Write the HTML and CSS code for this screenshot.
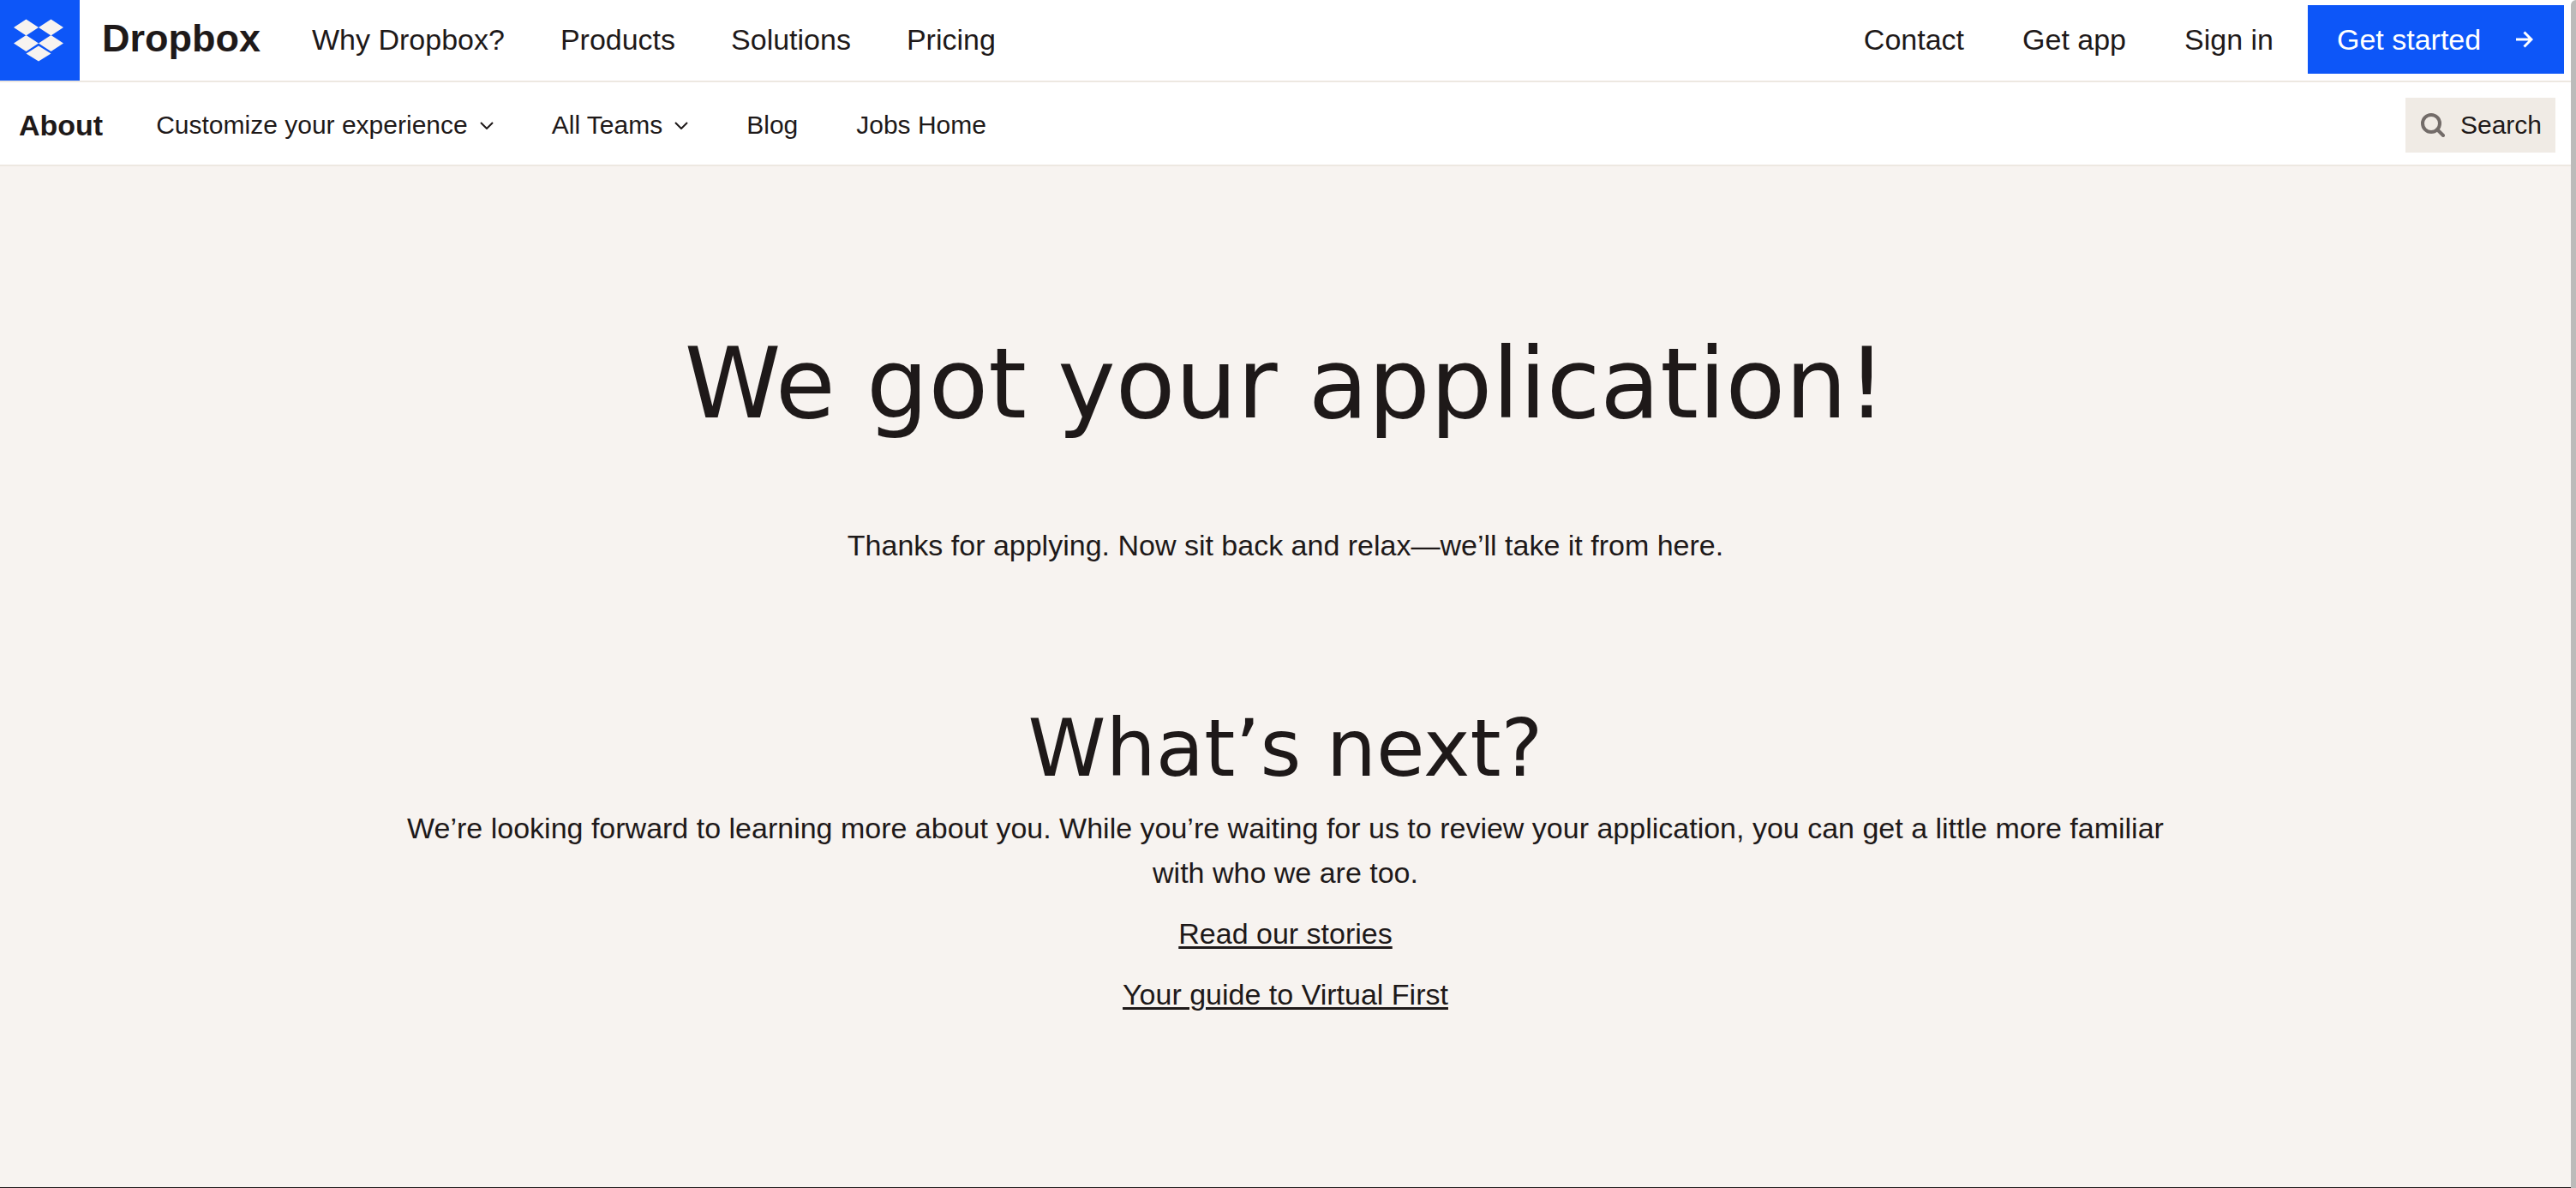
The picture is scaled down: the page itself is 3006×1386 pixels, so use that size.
FILE: index.html
```html
<!DOCTYPE html>
<html lang="en">
<head>
<meta charset="utf-8">
<title>Application received - Dropbox Jobs</title>
<link rel="stylesheet" href="styles.css">
</head>
<body>
<div class="page">
  <header class="topbar">
    <a class="logo" href="#" aria-label="Dropbox home">
      <svg viewBox="0 0 60 50" width="60" height="50" fill="currentColor" aria-hidden="true">
        <path d="M15.500.5 30 10 15.500 19.500 1 10zM44.500.5 59 10 44.500 19.500 30 10zM15.500 19 30 28.500 15.500 38 1 28.500zM44.500 19 59 28.500 44.500 38 30 28.500zM30 31.500 44.500 40.500 30 49.500 15.500 40.500z"/>
      </svg>
    </a>
    <a class="wordmark" href="#">Dropbox</a>
    <nav class="links" aria-label="Main">
      <a href="#">Why Dropbox?</a>
      <a href="#">Products</a>
      <a href="#">Solutions</a>
      <a href="#">Pricing</a>
    </nav>
    <nav class="links links-end" aria-label="Account">
      <a href="#">Contact</a>
      <a href="#">Get app</a>
      <a href="#">Sign in</a>
    </nav>
    <button class="cta" type="button">Get started
      <svg viewBox="0 0 20 20" width="20" height="20" fill="none" stroke="currentColor" stroke-width="3" aria-hidden="true"><path d="M0 10h18M9.500 1.500 18 10l-8.500 8.500"/></svg>
    </button>
  </header>

  <div class="subbar">
    <a class="section" href="#">About</a>
    <nav class="sublinks" aria-label="Jobs">
      <button class="menu" type="button">Customize your experience
        <svg viewBox="0 0 16 9" width="16" height="9" fill="none" stroke="currentColor" stroke-width="2" aria-hidden="true"><path d="M1 1l7 7 7-7"/></svg>
      </button>
      <button class="menu" type="button">All Teams
        <svg viewBox="0 0 16 9" width="16" height="9" fill="none" stroke="currentColor" stroke-width="2" aria-hidden="true"><path d="M1 1l7 7 7-7"/></svg>
      </button>
      <a href="#">Blog</a>
      <a href="#">Jobs Home</a>
    </nav>
    <button class="search" type="button">
      <svg viewBox="0 0 28 28" width="28" height="28" fill="none" stroke="currentColor" stroke-width="4" aria-hidden="true"><circle cx="12" cy="12" r="10"/><path d="M19 19l7 7" stroke-linecap="round"/></svg>
      <span>Search</span>
    </button>
  </div>

  <main class="content">
    <h1>We got your application!</h1>
    <p class="lead">Thanks for applying. Now sit back and relax—we’ll take it from here.</p>
    <h2>What’s next?</h2>
    <p>We’re looking forward to learning more about you. While you’re waiting for us to review your application, you can get a little more familiar with who we are too.</p>
    <p><a href="#">Read our stories</a></p>
    <p><a href="#">Your guide to Virtual First</a></p>
  </main>
</div>
<div class="scrollbar" aria-hidden="true"></div>
</body>
</html>
```
FILE: styles.css
```css
* { box-sizing: border-box; }

body {
  margin: 0;
  min-height: 100vh;
  display: flex;
  background: #fff;
  color: #1e1919;
  font-family: "Liberation Sans", Arial, sans-serif;
  font-size: 34px;
}

a { color: inherit; text-decoration: none; }

button {
  margin: 0;
  padding: 0;
  border: 0;
  background: none;
  color: inherit;
  font: inherit;
  cursor: pointer;
}

.page {
  flex: 1;
  display: flex;
  flex-direction: column;
  border-bottom: 1px solid #1e1919;
}

.scrollbar {
  width: 6px;
  border-top-left-radius: 6px;
  background: #bcbbba;
}

.topbar,
.subbar {
  display: flex;
  align-items: center;
  border-bottom: 2px solid #ede8e1;
}

.topbar { height: 96px; padding: 0 8px 2px 0; }

.subbar { height: 98px; padding: 4px 18px 0 22px; font-size: 30px; }

.logo {
  align-self: flex-start;
  width: 93px;
  height: 94px;
  display: flex;
  align-items: center;
  padding-left: 15px;
  background: #0d56f8;
  color: #f7f3f0;
}

.wordmark {
  margin-left: 26px;
  padding-bottom: 2px;
  font-size: 45px;
  font-weight: 700;
}

.links {
  display: flex;
  gap: 65px;
  margin-left: 60px;
}

.links-end { gap: 68px; margin-left: auto; margin-right: 40px; }

.cta {
  display: flex;
  align-items: center;
  justify-content: space-between;
  width: 299px;
  height: 80px;
  padding: 0 36px 0 34px;
  background: #0d56f8;
  color: #fff;
}

.section { font-size: 34px; font-weight: 700; }

.sublinks {
  display: flex;
  align-items: center;
  gap: 68px;
  margin-left: 62px;
}

.menu { display: flex; align-items: center; gap: 14px; }

.search {
  display: flex;
  align-items: center;
  gap: 18px;
  height: 64px;
  margin-left: auto;
  padding: 0 16px 0 18px;
  background: #f0ebe5;
}

.search svg { color: #736c69; }

.content {
  flex: 1;
  padding: 190px 15% 0;
  background: #f7f3f0;
  text-align: center;
}

h1, h2 {
  margin: 0;
  font-family: "DejaVu Sans", Verdana, sans-serif;
  font-weight: 400;
}

h1 { font-size: 114px; line-height: 128px; }

h2 { margin-bottom: 18px; font-size: 92px; line-height: 96px; }

p { margin: 0 0 19px; line-height: 52px; }

.lead { margin: 98px 0 164px; }

p a {
  text-decoration: underline;
  text-decoration-thickness: 3px;
  text-underline-offset: 3px;
}
```
